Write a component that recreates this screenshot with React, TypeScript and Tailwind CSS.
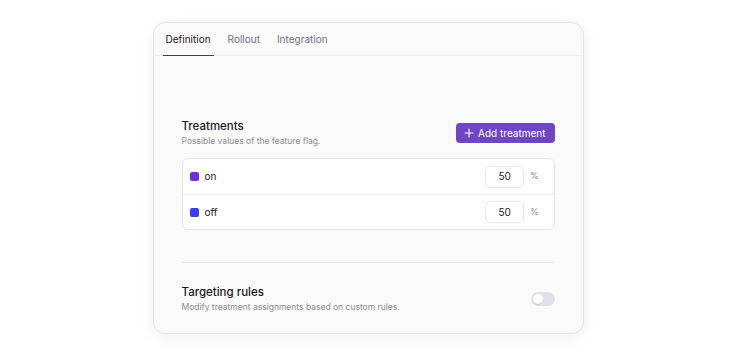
import React from 'react';

const treatments = [
  { name: 'on', color: 'bg-[#6d2fd6]', value: 50 },
  { name: 'off', color: 'bg-[#3b3df5]', value: 50 },
];

export default function App() {
  return (
    <div className="w-[736px] h-[356px] bg-white flex justify-center pt-[22px] font-['Inter',sans-serif]">
      <div className="w-[431px] h-[312px] rounded-[12px] border border-[#e4e4e7] bg-[#fafafb] shadow-[0_4px_16px_rgba(0,0,0,0.06)] flex flex-col">
        {/* Tabs */}
        <div className="h-[33px] border-b border-[#ececef] flex items-end gap-[11px] px-[9px]">
          {['Definition', 'Rollout', 'Integration'].map((t, i) => (
            <div
              key={t}
              className={`px-[3px] pb-[9px] text-[10px] leading-[13px] ${
                i === 0 ? 'text-[#18181b] border-b border-[#3f3f46] -mb-px' : 'text-[#71717a]'
              }`}
            >
              {t}
            </div>
          ))}
        </div>

        <div className="flex-1 px-[28px] pt-[63px]">
          {/* Treatments */}
          <div className="flex items-start justify-between">
            <div>
              <div className="text-[11.5px] leading-[15px] font-medium text-[#18181b]">Treatments</div>
              <div className="text-[8.5px] leading-[12px] text-[#8a8a93] mt-[1px]">Possible values of the feature flag.</div>
            </div>
            <button className="mt-[4px] h-[20px] pl-[8px] pr-[9px] rounded-[4px] bg-[#6e45c2] text-white text-[10px] flex items-center gap-[4px]">
              <svg width="10" height="10" viewBox="0 0 10 10" fill="none" stroke="white" strokeWidth="1.1" strokeLinecap="round">
                <path d="M5 1v8M1 5h8" />
              </svg>
              Add treatment
            </button>
          </div>

          <div className="mt-[11px] rounded-[6px] border border-[#e6e6ea] bg-white">
            {treatments.map((t, i) => (
              <div
                key={t.name}
                className={`h-[35px] flex items-center pl-[7px] pr-[15px] ${i > 0 ? 'border-t border-[#ececef]' : ''}`}
              >
                <span className={`w-[9px] h-[9px] rounded-[2px] ${t.color}`} />
                <span className="ml-[6px] text-[10px] text-[#18181b]">{t.name}</span>
                <div className="ml-auto w-[39px] h-[22px] rounded-[5px] border border-[#e6e6ea] bg-white flex items-center justify-center text-[10px] text-[#18181b]">
                  {t.value}
                </div>
                <span className="ml-[6px] text-[8.5px] text-[#8a8a93]">%</span>
              </div>
            ))}
          </div>

          <div className="mt-[32px] border-t border-[#e6e6ea]" />

          {/* Targeting rules */}
          <div className="mt-[22px] flex items-center justify-between">
            <div>
              <div className="text-[11.5px] leading-[15px] font-medium text-[#18181b]">Targeting rules</div>
              <div className="text-[8.5px] leading-[12px] text-[#8a8a93] mt-[1px]">
                Modify treatment assignments based on custom rules.
              </div>
            </div>
            <div className="w-[24px] h-[14px] rounded-full bg-[#e0e0e5] p-[2px] flex items-center">
              <div className="w-[10px] h-[10px] rounded-full bg-white shadow-[0_1px_1px_rgba(0,0,0,0.1)]" />
            </div>
          </div>
        </div>
      </div>
    </div>
  );
}
